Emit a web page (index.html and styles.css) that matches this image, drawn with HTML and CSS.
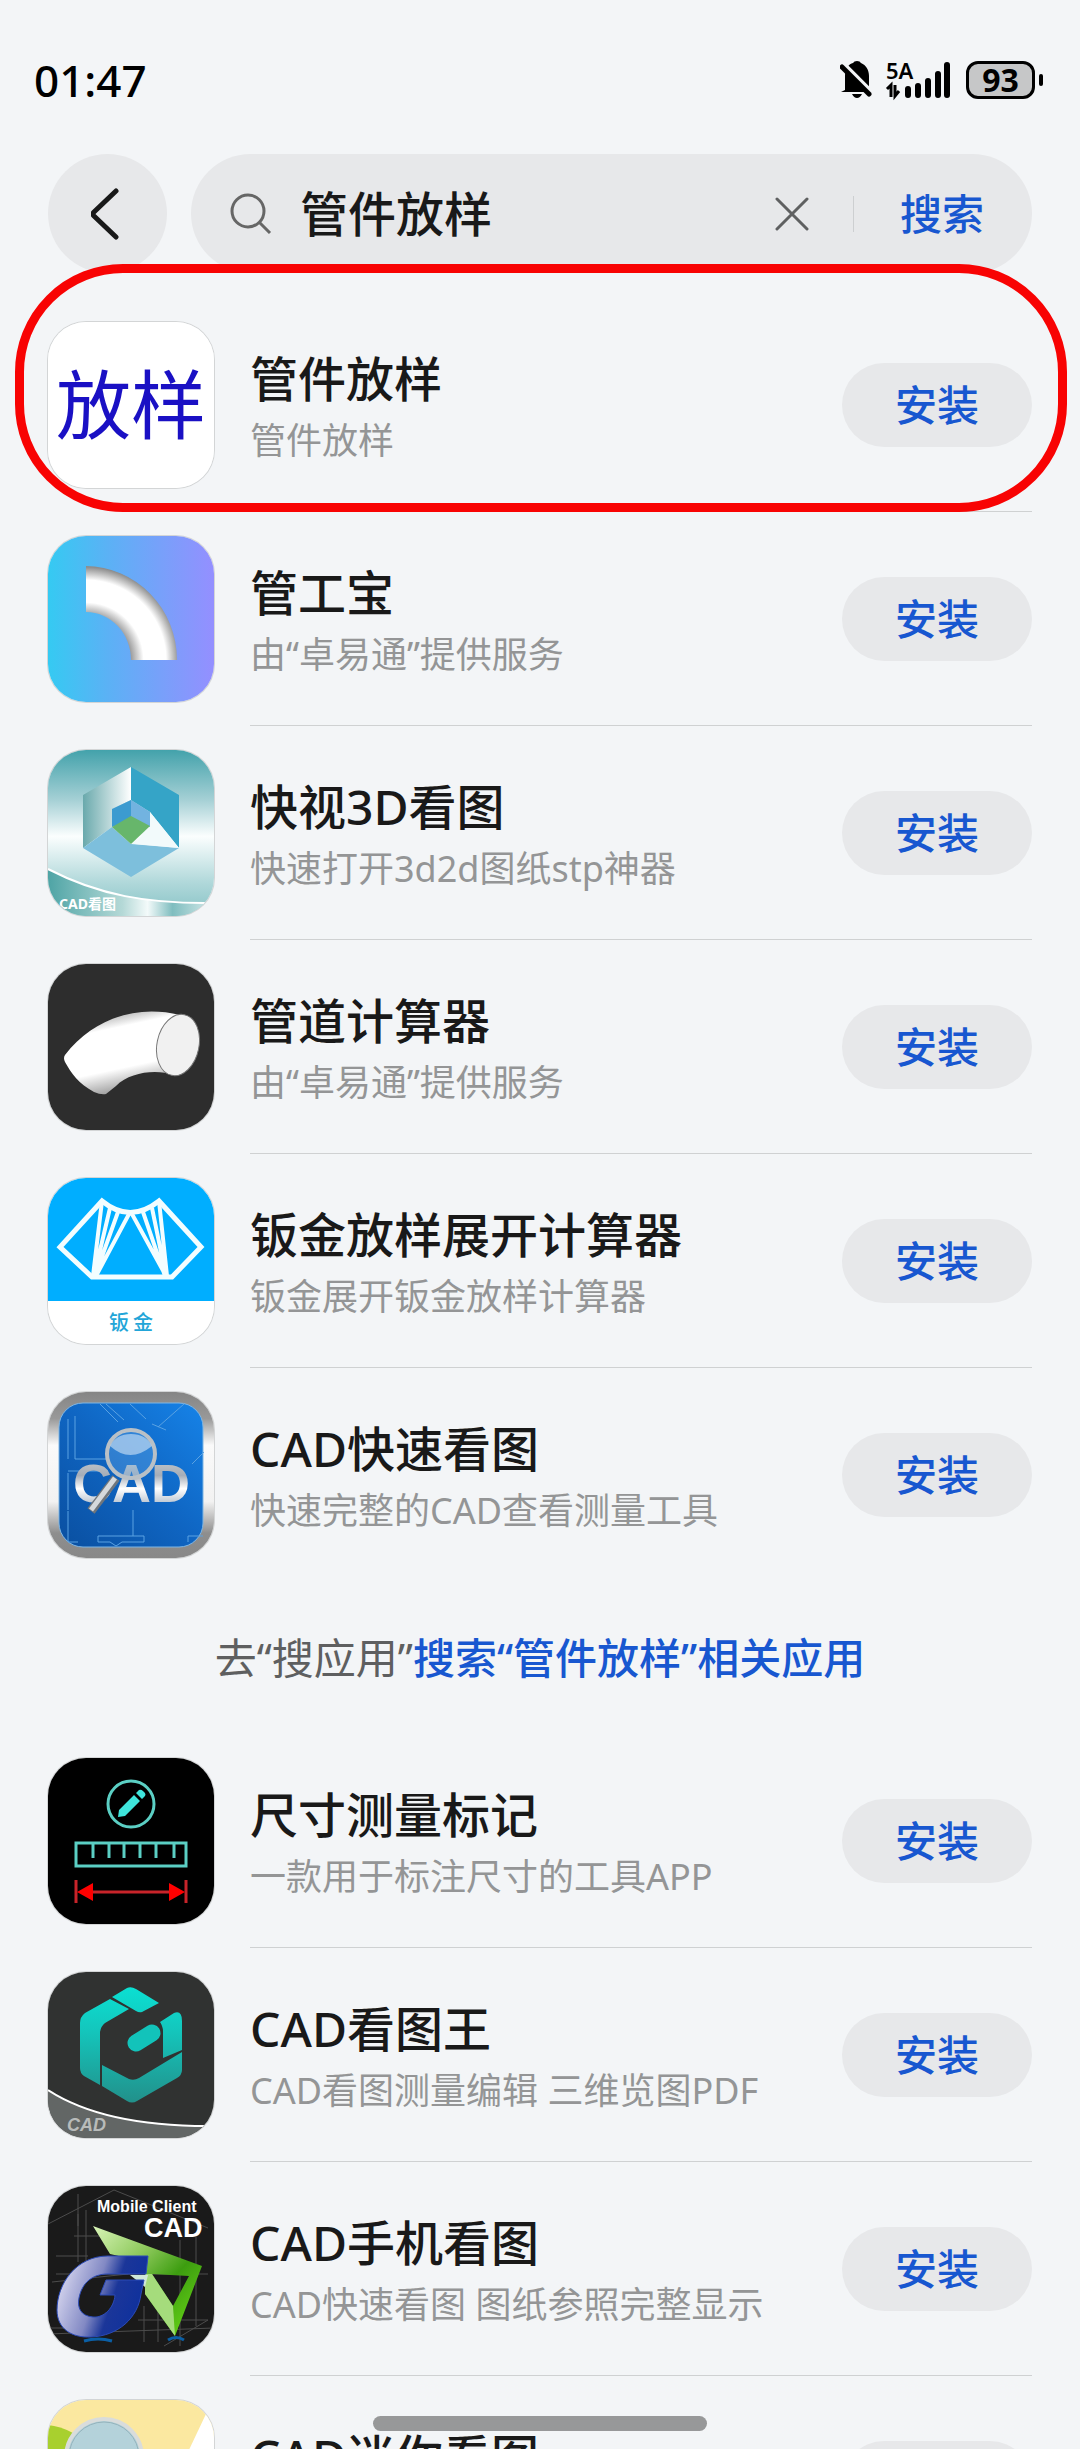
FILE: index.html
```html
<!DOCTYPE html>
<html lang="zh-CN">
<head>
<meta charset="utf-8">
<meta name="viewport" content="width=device-width, initial-scale=1">
<title>管件放样</title>
<link rel="stylesheet" href="styles.css">
</head>
<body>
<div class="screen">
  <div class="status">
    <time class="clock">01:47</time>
    <div class="status-icons">
      <svg width="32" height="38" viewBox="0 0 32 38" aria-hidden="true">
        <path d="M5 29V15C5 7 9 3 13 2Q14 0 17 0T21 2C26 4 29 9 29 15V29L31 31H1Z"/>
        <path d="M12 33H22Q20 37 17 37T12 33Z"/>
        <path d="M2 1L34 33" stroke="#f3f5f7" stroke-width="4"/>
        <path d="M2 6L29 33" stroke="#000" stroke-width="5" stroke-linecap="round"/>
      </svg>
      <svg class="signal" width="66" height="38" viewBox="0 0 66 38" aria-hidden="true">
        <text x="0" y="18" class="net-label">5A</text>
        <path d="M1 28L5 24V36M9 24V35L13 30" fill="none" stroke="#000" stroke-width="3"/>
        <path d="M22 28V34M32 25V34M42 20V34M52 13V34M61 4V34" stroke="#000" stroke-width="6" stroke-linecap="round"/>
      </svg>
      <div class="battery">93</div>
    </div>
  </div>

  <header class="search">
    <button class="back" type="button" aria-label="返回">
      <svg width="28" height="52" viewBox="0 0 28 52"><path d="M25 3L3 24Q1 26 3 28L25 49" fill="none" stroke="#191919" stroke-width="5" stroke-linecap="round"/></svg>
    </button>
    <form class="search-box">
      <svg width="42" height="42" viewBox="0 0 42 42" aria-hidden="true"><circle cx="18" cy="18" r="16" fill="none" stroke="#666" stroke-width="3"/><path d="M29 29L40 40" stroke="#666" stroke-width="3"/></svg>
      <input class="query" type="text" aria-label="搜索" value="管件放样">
      <button class="clear" type="button" aria-label="清除">
        <svg width="34" height="34" viewBox="0 0 34 34"><path d="M2 2L32 32M32 2L2 32" stroke="#5f6061" stroke-width="3" stroke-linecap="round"/></svg>
      </button>
      <button class="submit" type="button">搜索</button>
    </form>
  </header>

  <main>
    <ul class="apps">
      <li class="app marked">
        <svg class="icon" viewBox="0 0 166 166" aria-hidden="true">
          <rect width="166" height="166" fill="#fff"/>
          <text x="8" y="111" class="t-fy">放样</text>
        </svg>
        <div class="body"><div class="info"><h2>管件放样</h2><p>管件放样</p></div><button class="install" type="button">安装</button></div>
      </li>
      <li class="app">
        <svg class="icon" viewBox="0 0 166 166" aria-hidden="true">
          <defs>
            <linearGradient id="sky"><stop offset="0" stop-color="#35caf2"/><stop offset=".35" stop-color="#5ab2f5"/><stop offset="1" stop-color="#948fff"/></linearGradient>
            <radialGradient id="elbow" gradientUnits="userSpaceOnUse" cx="38" cy="124" r="93"><stop offset=".48" stop-color="#999"/><stop offset=".62" stop-color="#fff"/><stop offset=".86" stop-color="#fff"/><stop offset="1" stop-color="#8d8d8d"/></radialGradient>
          </defs>
          <rect width="166" height="166" fill="url(#sky)"/>
          <path d="M38 30A92 94 0 0 1 129 124H83A45 48 0 0 0 38 76Z" fill="url(#elbow)"/>
        </svg>
        <div class="body"><div class="info"><h2>管工宝</h2><p>由“卓易通”提供服务</p></div><button class="install" type="button">安装</button></div>
      </li>
      <li class="app">
        <svg class="icon" viewBox="0 0 166 166" aria-hidden="true">
          <defs>
            <linearGradient id="steel" x2="0" y2="1"><stop offset="0" stop-color="#43a2ab"/><stop offset=".3" stop-color="#a5d0d5"/><stop offset=".52" stop-color="#fbfefe"/><stop offset=".8" stop-color="#b0d8da"/><stop offset="1" stop-color="#86c2c5"/></linearGradient>
            <linearGradient id="face"><stop offset="0" stop-color="#69a9ac"/><stop offset="1" stop-color="#fff"/></linearGradient>
            <linearGradient id="wave"><stop offset="0" stop-color="#4ea4a5"/><stop offset=".45" stop-color="#b5d9d7"/><stop offset=".6" stop-color="#f3fafa"/><stop offset=".75" stop-color="#7fbdbf"/><stop offset="1" stop-color="#d9ecec"/></linearGradient>
          </defs>
          <rect width="166" height="166" fill="url(#steel)"/>
          <path d="M0 119C50 145 100 154 166 153V166H0Z" fill="url(#wave)"/>
          <path d="M0 119C50 145 100 154 166 153" fill="none" stroke="#fff" stroke-width="2"/>
          <path d="M35 45L83 17V50L64 59V77L35 98Z" fill="url(#face)"/>
          <path d="M83 17L131 45V98L102 62L83 50Z" fill="#35a4c7"/>
          <path d="M35 98L64 77L83 94L131 98L83 127Z" fill="#7dbfdc"/>
          <path d="M102 62L131 98L87 94L102 75Z" fill="#f2fafb"/>
          <path d="M64 59L83 50V70L64 77Z" fill="#3c9bd0"/>
          <path d="M83 50L102 62V77L83 70Z" fill="#72b3e0"/>
          <path d="M64 77L83 66L102 76L83 94Z" fill="#67b66b"/>
          <text x="11" y="159" class="t-small">CAD看图</text>
        </svg>
        <div class="body"><div class="info"><h2>快视3D看图</h2><p>快速打开3d2d图纸stp神器</p></div><button class="install" type="button">安装</button></div>
      </li>
      <li class="app">
        <svg class="icon" viewBox="0 0 166 166" aria-hidden="true">
          <defs><linearGradient id="tube" x1=".3" y1="0" x2=".6" y2="1"><stop offset="0" stop-color="#999"/><stop offset=".22" stop-color="#fff"/><stop offset=".68" stop-color="#fff"/><stop offset="1" stop-color="#888"/></linearGradient></defs>
          <rect width="166" height="166" fill="#2d2d2d"/>
          <path d="M17 91C44 56 86 40 132 51L126 111C108 105 82 108 68 122L58 130Q53 131 46 128C31 120 23 109 17 98Q15 94 17 91Z" fill="url(#tube)"/>
          <ellipse cx="130" cy="81" rx="21" ry="31" transform="rotate(12 130 81)" fill="#f1f1f1" stroke="#777" stroke-width="1"/>
        </svg>
        <div class="body"><div class="info"><h2>管道计算器</h2><p>由“卓易通”提供服务</p></div><button class="install" type="button">安装</button></div>
      </li>
      <li class="app">
        <svg class="icon" viewBox="0 0 166 166" aria-hidden="true">
          <rect width="166" height="166" fill="#fff"/>
          <rect width="166" height="123" fill="#00aeff"/>
          <g fill="none" stroke="#f3fdff" stroke-width="5">
            <path d="M54 23L12 69L44 99H124L153 69L111 23Q82 46 54 23Z"/>
            <path d="M45 98L54 23M46 98L62 30M47 98L70 34M48 98L81 36M119 98L111 23M118 98L104 30M117 98L95 34M118 98L84 36" stroke-width="4"/>
          </g>
          <text x="61" y="152" class="t-bj">钣</text><text x="85" y="152" class="t-bj">金</text>
        </svg>
        <div class="body"><div class="info"><h2>钣金放样展开计算器</h2><p>钣金展开钣金放样计算器</p></div><button class="install" type="button">安装</button></div>
      </li>
      <li class="app">
        <svg class="icon" viewBox="0 0 166 166" aria-hidden="true">
          <defs>
            <linearGradient id="frame" x2="0" y2="1"><stop offset="0" stop-color="#858585"/><stop offset=".16" stop-color="#999"/><stop offset=".32" stop-color="#fafafa"/><stop offset=".66" stop-color="#f2f2f2"/><stop offset=".85" stop-color="#8e8e8e"/><stop offset="1" stop-color="#888"/></linearGradient>
            <linearGradient id="blue" x1="1" y1="0" x2="0" y2="1"><stop offset="0" stop-color="#1683e8"/><stop offset=".5" stop-color="#0f65c2"/><stop offset="1" stop-color="#0a4fa0"/></linearGradient>
            <linearGradient id="chrome" gradientUnits="userSpaceOnUse" x1="0" y1="68" x2="0" y2="112"><stop offset="0" stop-color="#c2c6ca"/><stop offset=".35" stop-color="#a5adb8"/><stop offset=".65" stop-color="#fff"/><stop offset="1" stop-color="#b9c3cf"/></linearGradient>
          </defs>
          <rect width="166" height="166" fill="url(#frame)"/>
          <rect x="11" y="11" width="144" height="144" rx="24" fill="url(#blue)" stroke="#7fb6e4"/>
          <path d="M20 27V67M27 24V67H60M20 79H60M20 81V118M52 12L70 30M58 12L76 28M82 12L98 27M110 35L136 12M104 32L118 38M144 72L156 60M20 119V150H30M50 144H96V150H74L68 154L62 150H50ZM85 118V144M140 150V144H155" fill="none" stroke="#5aa2e2" stroke-width="1"/>
          <text x="25" y="110" class="t-chrome" fill="url(#chrome)">CAD</text>
          <circle cx="83" cy="62" r="24" fill="#7fb9ee" fill-opacity=".3" stroke="#b9c0c6" stroke-width="4"/>
          <path d="M62 54Q82 72 104 54Q98 42 83 42T62 54Z" fill="#e2eefa" fill-opacity=".55"/>
          <path d="M68 86L43 119" stroke="#70767c" stroke-width="9"/>
          <path d="M67 86L43 118" stroke="#d5d9dc" stroke-width="5"/>
        </svg>
        <div class="body"><div class="info"><h2>CAD快速看图</h2><p>快速完整的CAD查看测量工具</p></div><button class="install" type="button">安装</button></div>
      </li>
    </ul>

    <p class="more">去“搜应用”<a href="#search">搜索“管件放样”相关应用</a></p>

    <ul class="apps">
      <li class="app">
        <svg class="icon" viewBox="0 0 166 166" aria-hidden="true">
          <rect width="166" height="166" fill="#000"/>
          <g fill="none" stroke="#5bcfc4" stroke-width="3">
            <circle cx="83" cy="46" r="23"/>
            <rect x="28" y="85" width="110" height="23"/>
            <path d="M45 86V100M61 86V100M76 86V100M92 86V100M108 86V100M126 86V100"/>
          </g>
          <path d="M70 59L71 52L86 37L92 43L77 58ZM88 35L91 32Q93 31 95 33L97 35Q98 37 97 38L94 41Z" fill="#3fe5dc"/>
          <path d="M28 122V145M138 122V145M35 134H130" stroke="#c8242a" stroke-width="3"/>
          <path d="M29 134L45 125V143ZM137 134L121 125V143Z" fill="#f00"/>
        </svg>
        <div class="body"><div class="info"><h2>尺寸测量标记</h2><p>一款用于标注尺寸的工具APP</p></div><button class="install" type="button">安装</button></div>
      </li>
      <li class="app">
        <svg class="icon" viewBox="0 0 166 166" aria-hidden="true">
          <defs><linearGradient id="teal" gradientUnits="userSpaceOnUse" x1="0" y1="15" x2="0" y2="131"><stop offset="0" stop-color="#0be0d2"/><stop offset=".35" stop-color="#13c8be"/><stop offset="1" stop-color="#22908a"/></linearGradient></defs>
          <rect width="166" height="166" fill="#303231"/>
          <path d="M0 118C40 144 95 154 166 154V166H0Z" fill="#626665"/>
          <path d="M0 118C40 144 95 154 160 154" fill="none" stroke="#fff" stroke-width="2"/>
          <g fill="url(#teal)">
            <path d="M64 25L79 16Q83 14 88 17L111 31L94 40Q91 41 88 39Z"/>
            <path d="M62 27L81 37L57 51Q53 54 52 60V113L36 104Q32 101 32 96V51Q32 45 37 41Z"/>
            <path d="M54 93L81 107Q86 109 91 106L134 80V98Q134 103 129 106L89 129Q84 132 79 129L54 114Z"/>
            <path d="M112 50L126 41Q134 38 134 49V78L115 86V61Q115 54 112 50Z"/>
          </g>
          <path d="M88 71L104 61" stroke="#12c3ba" stroke-width="17" stroke-linecap="round"/>
          <path d="M109 50Q114 54 114 62V84" stroke="#303231" stroke-width="2" fill="none"/>
          <text x="19" y="159" class="t-king">CAD</text>
        </svg>
        <div class="body"><div class="info"><h2>CAD看图王</h2><p>CAD看图测量编辑 三维览图PDF</p></div><button class="install" type="button">安装</button></div>
      </li>
      <li class="app">
        <svg class="icon" viewBox="0 0 166 166" aria-hidden="true">
          <defs>
            <linearGradient id="green" x2="1" y2="1"><stop offset="0" stop-color="#d9f5b8"/><stop offset=".35" stop-color="#8cc85a"/><stop offset=".6" stop-color="#3d9d10"/><stop offset="1" stop-color="#6fe018"/></linearGradient>
            <linearGradient id="gee" y1=".4"  x2="1" y2=".7"><stop offset="0" stop-color="#d5d5ee"/><stop offset=".4" stop-color="#8289c4"/><stop offset=".6" stop-color="#1b3699"/><stop offset="1" stop-color="#0b2f9e"/></linearGradient>
          </defs>
          <rect width="166" height="166" fill="#1a1a1a"/>
          <path d="M0 38L66 4L160 42M30 28V76M38 24V80M26 50H60M8 88H160M4 96L80 88M0 148L166 142M96 120V156M110 116V156M90 134H160M30 8V40M132 54V160M148 50V140M0 142H60M116 160L160 134M8 70H40" fill="none" stroke="#4c4c4c" stroke-width="1"/>
          <path d="M45 40L154 80L127 150L97 108V76L62 68ZM104 88L125 120L141 90Z" fill="url(#green)" fill-rule="evenodd"/>
          <path d="M97 88L104 88L125 120L127 150L97 108Z" fill="#a5dc7c"/>
          <path d="M82 89H100L97 101Z" fill="#cfe8d8"/>
          <path d="M100 70H60C28 70 9 98 9 124C9 143 24 152 43 151C70 150 90 132 93 108L96 94H58L52 109H67C66 122 56 132 45 131C33 130 29 122 31 112C34 97 44 88 60 88H98Z" fill="url(#gee)" stroke="#2b4bb8" stroke-width="1"/>
          <path d="M36 155Q50 151 64 155M120 154Q128 149 136 154" stroke="#0b5fa5" stroke-width="3" fill="none"/>
          <text x="49" y="26" class="t-mobile">Mobile Client</text>
          <text x="96" y="51" class="t-mobile big">CAD</text>
        </svg>
        <div class="body"><div class="info"><h2>CAD手机看图</h2><p>CAD快速看图 图纸参照完整显示</p></div><button class="install" type="button">安装</button></div>
      </li>
      <li class="app">
        <svg class="icon" viewBox="0 0 166 166" aria-hidden="true">
          <rect width="166" height="166" fill="#fbe8a0"/>
          <path d="M0 25Q12 26 25 33V166H0Z" fill="#a8d02e"/>
          <path d="M158 14L140 52V166H166V14Z" fill="#fff"/>
          <circle cx="56" cy="57" r="38" fill="#b4d2da" stroke="#d9dcdb" stroke-width="4"/>
          <circle cx="56" cy="57" r="35" fill="none" stroke="#94b2bb"/>
        </svg>
        <div class="body"><div class="info"><h2>CAD迷你看图</h2></div><button class="install" type="button">安装</button></div>
      </li>
    </ul>
  </main>
  <div class="home-bar"></div>
</div>
</body>
</html>
```
FILE: styles.css
```css
* { box-sizing: border-box; }

body {
  margin: 0;
  background: #f3f5f7;
  color: #191919;
  font-family: "Noto Sans", "Noto Sans CJK SC", sans-serif;
}

button, input { font: inherit; color: inherit; border: 0; padding: 0; background: none; }
h2, p, ul { margin: 0; padding: 0; }
ul { list-style: none; }

.screen { position: relative; height: 100vh; overflow: hidden; }

/* Status bar */
.status {
  display: flex;
  align-items: center;
  justify-content: space-between;
  height: 154px;
  padding: 6px 37px 0 34px;
  color: #000;
}
.clock { font-size: 44px; line-height: 60px; font-weight: 500; }
.status-icons { display: flex; align-items: center; gap: 14px; }
.signal { overflow: visible; }
.net-label { font: 600 22px "Noto Sans", sans-serif; }
.battery {
  position: relative;
  width: 69px;
  height: 38px;
  margin-right: 8px;
  border: 3px solid #000;
  border-radius: 12px;
  background: #c6c7c8;
  font-size: 32px;
  line-height: 32px;
  font-weight: 700;
  text-align: center;
}
.battery::after {
  content: "";
  position: absolute;
  right: -11px;
  top: 10px;
  width: 4px;
  height: 12px;
  border-radius: 2px;
  background: #000;
}

/* Search header */
.search { display: flex; gap: 24px; padding: 0 48px; margin-bottom: 25px; }
.back {
  display: grid;
  flex: none;
  place-items: center;
  width: 119px;
  height: 119px;
  border-radius: 50%;
  background: #e7e8ea;
}
.back svg { margin-right: 6px; }
.search-box {
  display: flex;
  flex: 1;
  min-width: 0;
  align-items: center;
  height: 119px;
  padding: 0 48px 0 39px;
  border-radius: 60px;
  background: #e7e8ea;
}
.search-box svg, .clear, .submit { flex: none; }
.query { flex: 1; min-width: 0; margin-left: 28px; font-size: 48px; line-height: 64px; font-weight: 500; outline: 0; }
.clear { display: grid; place-items: center; padding-right: 44px; }
.submit {
  padding-left: 47px;
  background: linear-gradient(#cdcfd1, #cdcfd1) left / 1px 36px no-repeat;
  color: #1857d0;
  font-size: 42px;
  line-height: 56px;
  font-weight: 500;
}

/* App rows */
.app { display: flex; gap: 36px; padding: 0 48px; }
.icon { flex: none; width: 166px; height: 166px; margin: 24px 0; border-radius: 38px; box-shadow: 0 0 0 1px #d3d5d6; }
.body { display: flex; flex: 1; min-width: 0; align-items: center; border-bottom: 1px solid #cfd1d2; }
.app:last-child .body { border-bottom-color: transparent; }
.info { flex: 1; min-width: 0; min-height: 128px; padding-top: 6px; }
h2 { font-size: 48px; line-height: 64px; font-weight: 500; }
.info p { margin-top: 2px; font-size: 36px; line-height: 56px; color: #949596; }
.install {
  width: 190px;
  height: 84px;
  border-radius: 42px;
  background: #e7e8ea;
  color: #1857d0;
  font-size: 42px;
  line-height: 56px;
  font-weight: 500;
}

.marked { position: relative; }
.marked::after {
  content: "";
  position: absolute;
  inset: -34px 13px 0 15px;
  border: 9px solid #f80303;
  border-radius: 108px;
  pointer-events: none;
}

.more { padding: 48px; font-size: 42px; line-height: 56px; color: #5e5f60; text-align: center; }
.more a { color: #1857d0; font-weight: 500; text-decoration: none; }

/* Lettering inside app icons */
.t-fy { font: 400 75px "Noto Sans CJK SC", sans-serif; fill: #1a10c4; }
.t-small { font: 700 14px "Noto Sans", "Noto Sans CJK SC", sans-serif; fill: #fff; }
.t-bj { font: 500 20px "Noto Sans CJK SC", sans-serif; fill: #22a5d8; }
.t-chrome { font: 700 54px "Liberation Sans", sans-serif; }
.t-king { font: italic 700 18px "Liberation Sans", sans-serif; fill: #b8bbba; }
.t-mobile { font: 700 16px "Liberation Sans", sans-serif; fill: #fff; }
.t-mobile.big { font-size: 27px; }

.home-bar {
  position: absolute;
  left: 50%;
  bottom: 18px;
  width: 334px;
  height: 15px;
  margin-left: -167px;
  border-radius: 8px;
  background: #979899;
}
```
